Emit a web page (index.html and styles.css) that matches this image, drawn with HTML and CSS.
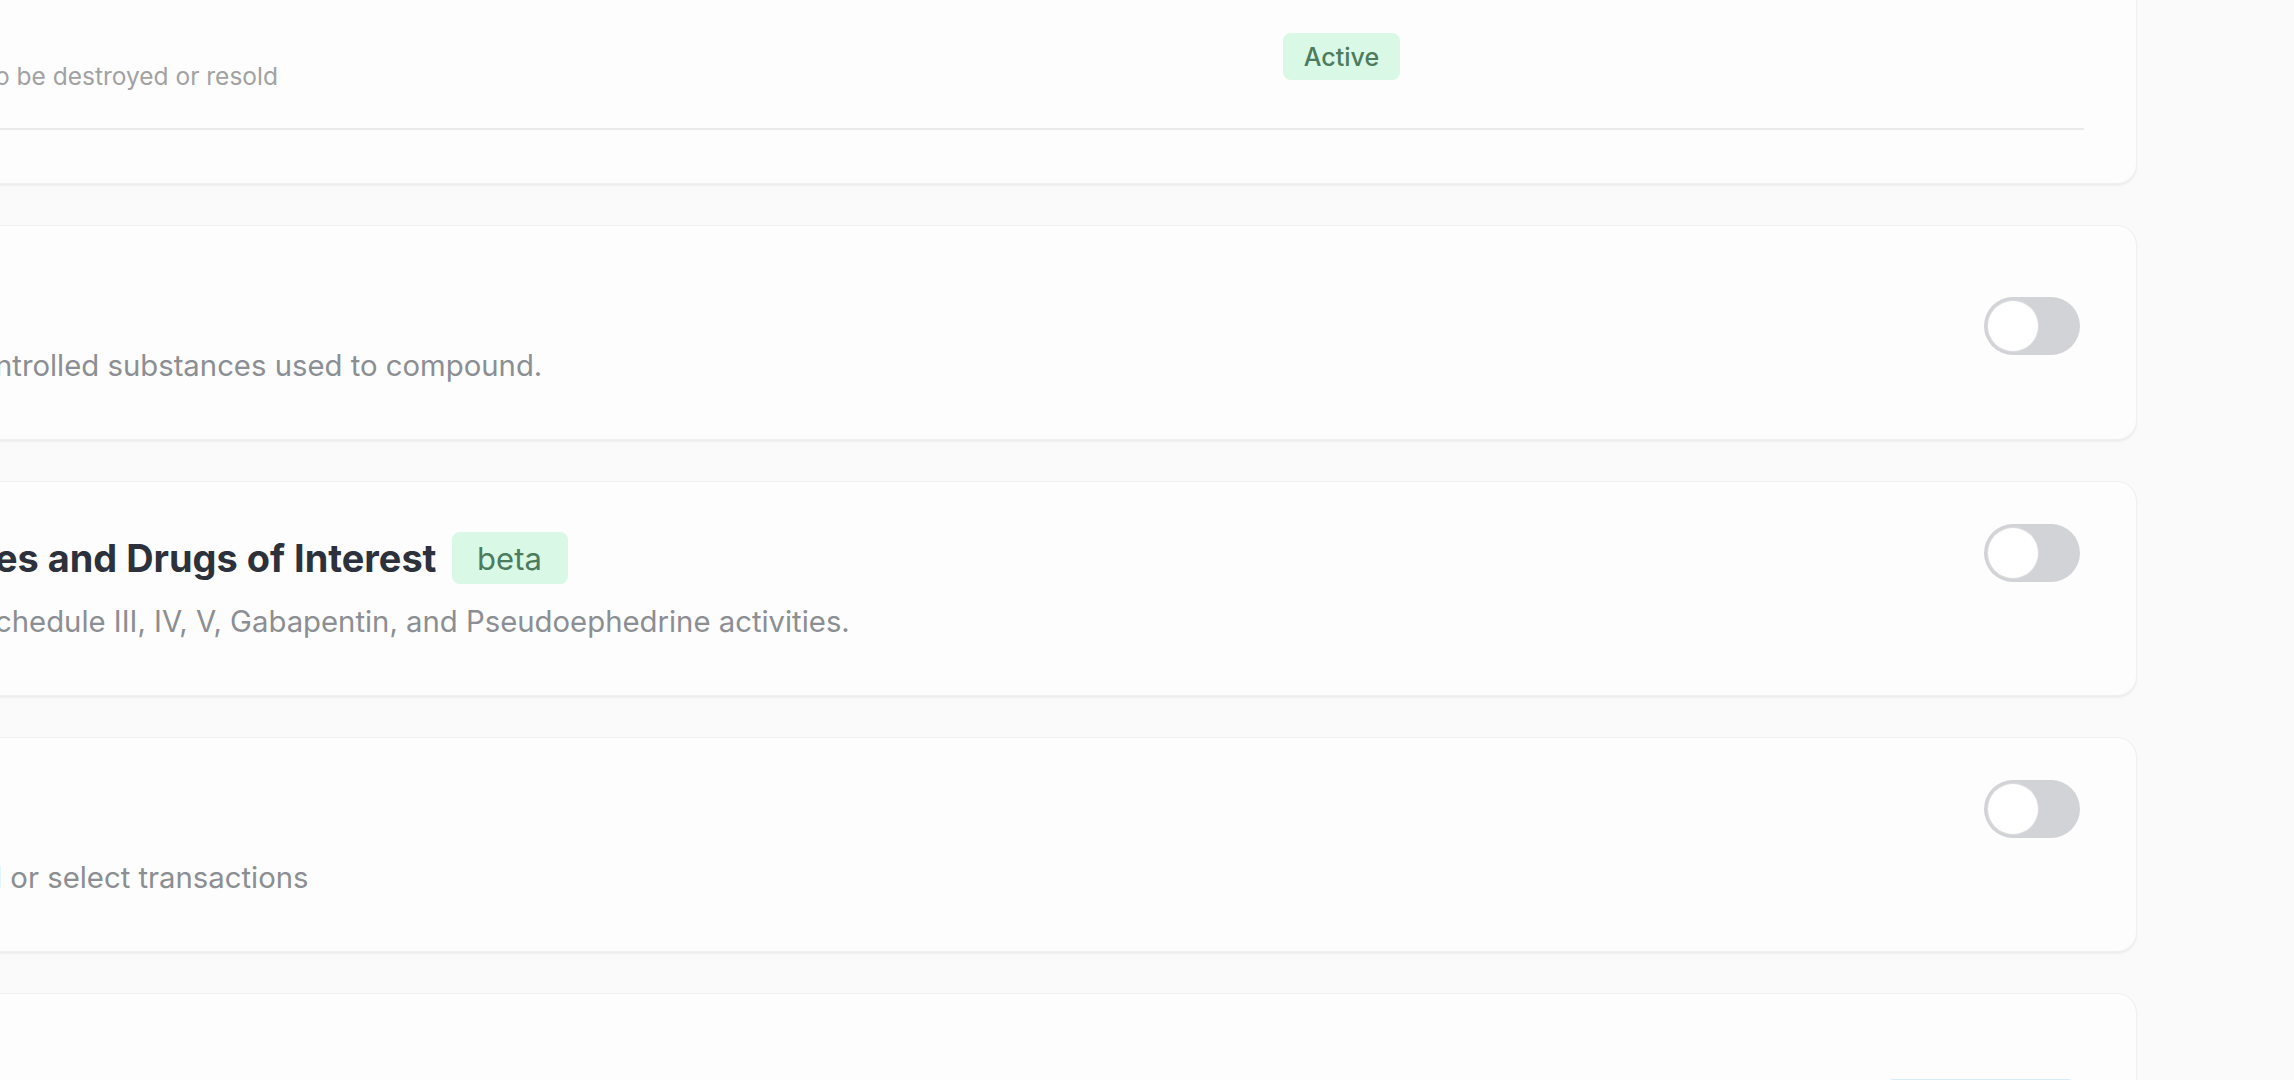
FILE: index.html
```html
<!doctype html>
<html lang="en">
  <head>
    <meta charset="UTF-8" />
    <meta name="viewport" content="width=device-width, initial-scale=1.0" />
    <title>Settings</title>
    <link rel="stylesheet" href="styles.css">
  </head>
  <body>
    <div class="settings-list">
      <!-- disposal list -->
      <div class="card table-card">
        <div class="table-row">
          <div class="row-desc">o be destroyed or resold</div>
          <div class="row-status">
            <span class="badge badge-active">Active</span>
          </div>
        </div>
      </div>

      <div class="card">
        <div class="card-body">
          <div class="card-title-row"></div>
          <div class="card-desc">ntrolled substances used to compound.</div>
        </div>
        <div class="toggle toggle-centered"><span class="knob"></span></div>
      </div>

      <div class="card">
        <div class="card-body">
          <div class="card-title-row">
            <span class="card-title">es and Drugs of Interest</span>
            <span class="badge badge-beta">beta</span>
          </div>
          <div class="card-desc">chedule III, IV, V, Gabapentin, and Pseudoephedrine activities.</div>
        </div>
        <div class="toggle"><span class="knob"></span></div>
      </div>

      <div class="card">
        <div class="card-body">
          <div class="card-title-row"></div>
          <div class="card-desc">l or select transactions</div>
        </div>
        <div class="toggle"><span class="knob"></span></div>
      </div>

      <div class="card">
        <div class="card-body">
          <div class="card-title-row"></div>
        </div>
        <button class="outline-btn" type="button">Configure</button>
      </div>
    </div>
  </body>
</html>
```

FILE: styles.css
```css
body {
  margin: 0;
  height: 100vh;
  overflow: hidden;
  background-color: #fafafa;
  font-family: Inter, "Noto Sans", sans-serif;
}

.settings-list {
  display: flex;
  flex-direction: column;
  gap: 41px;
  margin: -21px 157px 0 -46px;
}

.card {
  display: flex;
  align-items: flex-start;
  min-height: 116px;
  padding: 42px 56px 55px 40px;
  background-color: #fdfdfd;
  border: 1px solid #f0f0f0;
  border-radius: 20px;
  box-shadow: 0 2px 2px rgba(0, 0, 0, 0.05);
}

.card-body {
  flex: 1;
  padding-top: 14px;
}

.card-title-row {
  display: flex;
  align-items: center;
  gap: 15px;
  height: 40px;
}

.card-title {
  font-size: 37.9px;
  font-weight: 650;
  color: #2c313c;
  white-space: nowrap;
}

.card-desc {
  margin-top: 26px;
  font-size: 29.3px;
  line-height: 36px;
  color: #8b8e93;
  white-space: nowrap;
}

.badge {
  display: inline-flex;
  align-items: center;
  justify-content: center;
  border-radius: 8px;
  background-color: #d9f8e5;
  color: #4c7b5e;
  font-weight: 500;
}

.badge-active {
  width: 117px;
  height: 47px;
  font-size: 25px;
}

.badge-beta {
  width: 116px;
  height: 52px;
  font-size: 31px;
  font-weight: 400;
}

/* first card is a table of items */
.table-card {
  display: block;
  padding: 0 52px 53px 40px;
}

.table-row {
  display: grid;
  grid-template-columns: 1288px 1fr;
  align-items: start;
  padding: 53px 0 36px;
  border-bottom: 2px solid #eaeaea;
}

.row-desc {
  margin-top: 27px;
  font-size: 24.5px;
  line-height: 32px;
  color: #a2a2a2;
  white-space: nowrap;
}

.toggle {
  position: relative;
  flex-shrink: 0;
  width: 96px;
  height: 58px;
  border-radius: 29px;
  background-color: #d2d3d7;
}

.toggle-centered {
  align-self: center;
}

.knob {
  position: absolute;
  top: 4px;
  left: 4px;
  width: 50px;
  height: 50px;
  border-radius: 50%;
  background-color: #fff;
  box-shadow: 0 0 0 1px #dcdde0;
}

.outline-btn {
  flex-shrink: 0;
  width: 197px;
  height: 64px;
  margin-top: 43px;
  margin-right: 1px;
  border: 2px solid #d5ebf6;
  border-radius: 12px;
  background-color: #f4fafd;
  color: #3c8dbc;
  font-family: inherit;
  font-size: 24px;
}
```
